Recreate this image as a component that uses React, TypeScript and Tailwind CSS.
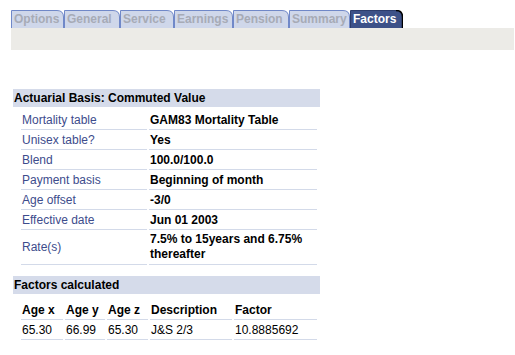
const tabs = [
  { label: 'Options', w: 53 },
  { label: 'General', w: 56 },
  { label: 'Service', w: 54 },
  { label: 'Earnings', w: 59 },
  { label: 'Pension', w: 56 },
  { label: 'Summary', w: 61 },
  { label: 'Factors', w: 53, active: true },
];

const basis: [string, string][] = [
  ['Mortality table', 'GAM83 Mortality Table'],
  ['Unisex table?', 'Yes'],
  ['Blend', '100.0/100.0'],
  ['Payment basis', 'Beginning of month'],
  ['Age offset', '-3/0'],
  ['Effective date', 'Jun 01 2003'],
];

const factorHead = ['Age x', 'Age y', 'Age z', 'Description', 'Factor'];
const factorRow = ['65.30', '66.99', '65.30', 'J&S 2/3', '10.8885692'];

function Tab({ label, w, active }: { label: string; w: number; active?: boolean }) {
  const h = 18;
  return (
    <div className="relative h-[18px] shrink-0" style={{ width: w }}>
      <svg className="absolute inset-0" width={w} height={h} viewBox={`0 0 ${w} ${h}`}>
        <path
          d={`M0.5 ${h} V0.5 H${w - 7} Q${w - 0.5} 0.5 ${w - 0.5} 7 V${h} Z`}
          fill={active ? '#3d5188' : '#cfd7ea'}
          stroke="none"
        />
        <path d={`M0.5 ${h} V0.5 H${w - 7}`} fill="none" stroke={active ? '#2c3c6c' : '#7088c8'} />
        <path
          d={`M${w - 7} 0.5 Q${w - 0.5} 0.5 ${w - 0.5} 7 V${h}`}
          fill="none"
          stroke={active ? '#000000' : '#7088c8'}
          strokeWidth={active ? 1.5 : 1}
        />
      </svg>
      <span
        className={`relative block pl-[3px] pt-[1px] text-[12px] leading-[17px] font-bold ${
          active ? 'text-white' : 'text-[#a7abb6]'
        }`}
      >
        {label}
      </span>
    </div>
  );
}

export default function App() {
  return (
    <div className="h-[355px] w-[515px] overflow-hidden bg-white font-['Liberation_Sans',Arial,sans-serif] text-[12px] text-black">
      <div className="pl-[11px] pt-[10px]">
        <div className="flex h-[18px]">
          {tabs.map((t) => (
            <Tab key={t.label} {...t} />
          ))}
        </div>
        <div className="mr-[1px] h-[22px] bg-[#ecebe7]" />
      </div>

      <div className="ml-[13px] mt-[39px] w-[307px]">
        <div className="h-[18px] bg-[#d5dbea] pl-[1px] font-bold leading-[18px]">Actuarial Basis: Commuted Value</div>
        <div className="ml-[8px] mt-[3px] grid grid-cols-[126px_168px] gap-x-[2px]">
          {basis.map(([k, v]) => (
            <div key={k} className="contents">
              <div className="flex h-[20px] items-center border-b border-[#d3dae9] pl-[1px] text-[#3d4c8c]">{k}</div>
              <div className="flex h-[20px] items-center border-b border-[#d3dae9] pl-[1px] font-bold">{v}</div>
            </div>
          ))}
          <div className="flex h-[35px] items-center border-b border-[#d3dae9] pl-[1px] text-[#3d4c8c]">Rate(s)</div>
          <div className="flex h-[35px] items-center border-b border-[#d3dae9] pl-[1px] font-bold leading-[15px]">
            7.5% to 15years and 6.75% thereafter
          </div>
        </div>

        <div className="mt-[11px] h-[18px] bg-[#d5dbea] pl-[1px] font-bold leading-[18px]">Factors calculated</div>
        <div className="ml-[8px] mt-[6px] grid grid-cols-[42px_40px_41px_82px_83px] gap-x-[2px]">
          {factorHead.map((h) => (
            <div key={h} className="flex h-[20px] items-center border-b border-[#d3dae9] pl-[1px] font-bold">
              {h}
            </div>
          ))}
          {factorRow.map((c, i) => (
            <div key={i} className="flex h-[20px] items-center border-b border-[#d3dae9] pl-[1px]">
              {c}
            </div>
          ))}
        </div>
      </div>
    </div>
  );
}
